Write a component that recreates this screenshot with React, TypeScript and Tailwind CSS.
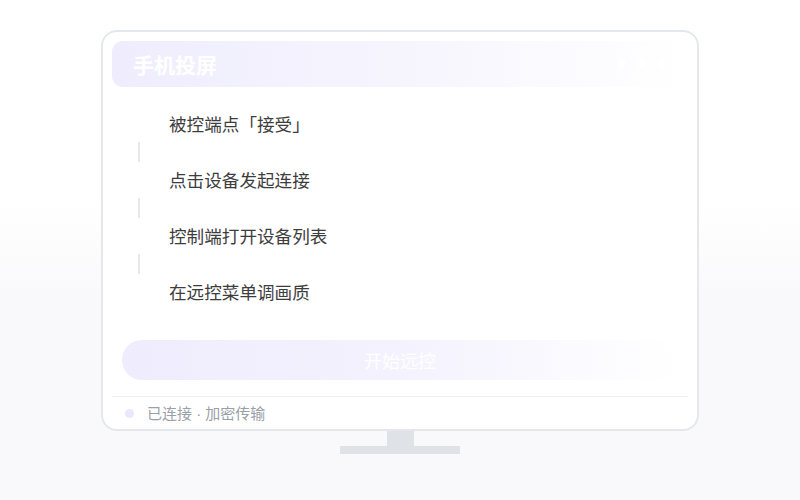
import React from 'react';

const STEPS = ['被控端点「接受」', '点击设备发起连接', '控制端打开设备列表', '在远控菜单调画质'];

const FONT = { fontFamily: '"Noto Sans CJK SC", "Noto Sans", sans-serif' };

export default function App() {
  return (
    <div
      className="w-[800px] h-[500px] bg-gradient-to-b from-white from-40% to-[#f9f9fb] to-60% flex flex-col items-center pt-[30px]"
      style={FONT}
    >
      {/* Monitor frame */}
      <div className="w-[598px] h-[401px] rounded-[16px] border-2 border-[#e4e7ec] bg-white pt-[9px] px-[9px] flex flex-col">
        {/* Header */}
        <div className="h-[46px] shrink-0 rounded-[11px] bg-gradient-to-r from-[#efedfd] via-[#f6f5fe] to-white flex items-center justify-between pl-[21px] pr-[22px]">
          <span className="text-[21px] font-bold text-white leading-none">手机投屏</span>
          <div className="flex gap-[12px]">
            <span className="w-[8px] h-[8px] rounded-full bg-white" />
            <span className="w-[8px] h-[8px] rounded-full bg-white" />
            <span className="w-[8px] h-[8px] rounded-full bg-white" />
          </div>
        </div>

        {/* Steps */}
        <div className="mt-[19px] flex flex-col">
          {STEPS.map((step, i) => (
            <div key={step} className="flex flex-col">
              <div className="h-[36px] flex items-center">
                <div className="w-[28px] ml-[13px] shrink-0" />
                <span className="ml-[16px] text-[17.6px] text-[#3d3d3d] leading-none">{step}</span>
              </div>
              {i < STEPS.length - 1 && (
                <div className="h-[20px] flex">
                  <div className="ml-[26px] w-[2px] h-full bg-[#e6e8ec]" />
                </div>
              )}
            </div>
          ))}
        </div>

        {/* Button */}
        <div className="mt-[30px] mx-[10px] h-[40px] rounded-full bg-gradient-to-r from-[#efecfd] via-[#f4f2fe] to-white flex items-center justify-center">
          <span className="text-[18px] text-white leading-none">开始远控</span>
        </div>

        {/* Footer */}
        <div className="mt-[16px] border-t border-[#eef0f3] flex-1 flex items-center px-[13px] gap-[13px]">
          <span className="w-[9px] h-[9px] rounded-full bg-[#ebe8fc]" />
          <span className="text-[15px] text-[#9aa0a8] leading-none">
            已连接<span style={{ fontFamily: '"Liberation Sans", sans-serif' }}> · </span>加密传输
          </span>
        </div>
      </div>

      {/* Stand */}
      <div className="w-[27px] h-[15px] bg-[#dfe2e7]" />
      <div className="w-[120px] h-[8px] bg-[#dfe2e7]" />
    </div>
  );
}
